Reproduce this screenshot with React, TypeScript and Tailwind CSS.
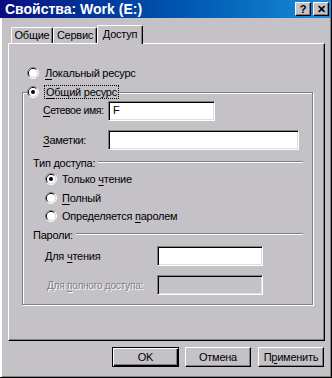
import React from "react";

const BG = "bg-[#c4c2c7]";

const Radio = ({ checked = false }: { checked?: boolean }) => (
  <svg width="12" height="12" viewBox="0 0 12 12" className="shrink-0">
    <path d="M2.11 9.89 A5.5 5.5 0 0 1 9.89 2.11" fill="none" stroke="#808080" strokeWidth="1" />
    <path d="M9.89 2.11 A5.5 5.5 0 0 1 2.11 9.89" fill="none" stroke="#ffffff" strokeWidth="1" />
    <path d="M2.82 9.18 A4.5 4.5 0 0 1 9.18 2.82" fill="none" stroke="#000000" strokeWidth="1" />
    <path d="M9.18 2.82 A4.5 4.5 0 0 1 2.82 9.18" fill="none" stroke="#dfdfdf" strokeWidth="1" />
    <circle cx="6" cy="6" r="4" fill="#ffffff" />
    {checked && <circle cx="6" cy="6" r="2" fill="#000000" />}
  </svg>
);

const Field = ({ w, value = "", disabled = false }: { w: string; value?: string; disabled?: boolean }) => (
  <div
    className={`${w} shrink-0 h-[20px] border border-t-[#808080] border-l-[#808080] border-r-white border-b-white shadow-[inset_1px_1px_0_#000,inset_-1px_-1px_0_#dfdfdf] ${
      disabled ? BG : "bg-white"
    } pl-[4px] pt-[3px] leading-none`}
  >
    {value}
  </div>
);

const Etched = () => <div className="flex-1 h-[2px] border-t border-t-[#808080] border-b border-b-white" />;

const Btn = ({ children, def = false }: { children: React.ReactNode; def?: boolean }) => (
  <div
    className={`h-[20px] flex items-center justify-center ${BG} ${
      def
        ? "w-[67px] border border-black shadow-[inset_1px_1px_0_#fff,inset_-1px_-1px_0_#000,inset_-2px_-2px_0_#808080]"
        : "w-[66px] border border-t-white border-l-white border-r-black border-b-black shadow-[inset_-1px_-1px_0_#808080]"
    }`}
  >
    {children}
  </div>
);

const TitleBtn = ({ children }: { children: React.ReactNode }) => (
  <div className={`w-[16px] h-[14px] ${BG} border border-t-white border-l-white border-r-black border-b-black shadow-[inset_-1px_-1px_0_#808080] flex items-center justify-center text-[11px] font-bold leading-none text-black`}>
    {children}
  </div>
);

const Tab = ({ label, w, active = false }: { label: string; w: string; active?: boolean }) => (
  <div
    className={`${w} ${BG} flex items-center justify-center rounded-t-[2px] border-t border-l border-t-white border-l-white border-r border-r-black shadow-[inset_-1px_0_0_#808080] ${
      active ? "h-[19px] -mb-px relative z-10 pb-[2px]" : "h-[16px]"
    }`}
  >
    {label}
  </div>
);

const U = ({ children }: { children: React.ReactNode }) => <span className="underline underline-offset-[2px]">{children}</span>;

export default function App() {
  return (
    <div className={`w-[332px] h-[378px] ${BG} flex flex-col border-r border-b border-black shadow-[inset_2px_0_0_#fff,inset_-1px_-1px_0_#808080] font-['Liberation_Sans',Arial,sans-serif] text-[11px] text-black overflow-hidden whitespace-nowrap`}>
      {/* title bar */}
      <div className="h-[18px] w-full flex items-center justify-between pl-[5px] pr-[2px] bg-linear-to-r from-[#0a0a80] to-[#1a8cd8]">
        <span className="text-white font-bold text-[14px] leading-none">Свойства: Work (E:)</span>
        <div className="flex gap-[2px]">
          <TitleBtn>?</TitleBtn>
          <TitleBtn>✕</TitleBtn>
        </div>
      </div>

      <div className="pl-[8px] flex flex-col tracking-[-0.25px]">
        {/* tabs */}
        <div className="mt-[7px] h-[18px] flex items-end pl-[3px]">
          <Tab label="Общие" w="w-[42px]" />
          <Tab label="Сервис" w="w-[44px]" />
          <Tab label="Доступ" w="w-[46px]" active />
        </div>

        {/* panel */}
        <div className="w-[317px] h-[298px] border border-t-white border-l-white border-r-black border-b-black shadow-[inset_-1px_-1px_0_#808080] flex flex-col">
          <div className="mt-[22px] h-[14px] pl-[18px] flex items-center gap-[6px]">
            <Radio />
            <span>
              <U>Л</U>окальный ресурс
            </span>
          </div>

          <div className="mt-[12px] ml-[13px] w-[291px] border border-[#808080] shadow-[inset_1px_1px_0_#fff,1px_1px_0_#fff] flex flex-col pb-[9px]">
            <div className={`-mt-[8px] ml-[4px] h-[14px] w-fit flex items-center ${BG}`}>
              <Radio checked />
              <span className="ml-[5px] border border-dotted border-black px-[1px] leading-[12px]">
                <U>О</U>бщий ресурс
              </span>
            </div>

            <div className="mt-[2px] h-[20px] flex items-center pl-[20px]">
              <span className="w-[65px] shrink-0 text-[10.5px] tracking-[-0.4px]">
                <U>С</U>етевое имя:
              </span>
              <Field w="w-[107px]" value="F" />
            </div>
            <div className="mt-[9px] h-[20px] flex items-center pl-[20px]">
              <span className="w-[65px] shrink-0">
                <U>З</U>аметки:
              </span>
              <Field w="w-[191px]" />
            </div>

            <div className="mt-[6px] h-[14px] flex items-center pl-[10px] pr-[9px]">
              <span>Тип доступа:</span>
              <div className="ml-[3px] flex-1 flex -mt-[2px]">
                <Etched />
              </div>
            </div>
            <div className="mt-[2px] h-[14px] flex items-center pl-[22px] gap-[5px]">
              <Radio checked />
              <span>
                Только <U>ч</U>тение
              </span>
            </div>
            <div className="mt-[5px] h-[14px] flex items-center pl-[22px] gap-[5px]">
              <Radio />
              <span>
                <U>П</U>олный
              </span>
            </div>
            <div className="mt-[4px] h-[14px] flex items-center pl-[22px] gap-[5px]">
              <Radio />
              <span>
                Определяется <U>п</U>аролем
              </span>
            </div>

            <div className="mt-[5px] h-[14px] flex items-center pl-[10px] pr-[9px]">
              <span>Пароли:</span>
              <div className="ml-[3px] flex-1 flex -mt-[2px]">
                <Etched />
              </div>
            </div>
            <div className="mt-[4px] h-[20px] flex items-center pl-[22px]">
              <span className="w-[112px] shrink-0">
                Для <U>ч</U>тения
              </span>
              <Field w="w-[106px]" />
            </div>
            <div className="mt-[9px] h-[20px] flex items-center pl-[22px]">
              <span className="w-[112px] shrink-0 pl-[2px] text-[10px] tracking-[-0.2px] text-[#808080] [text-shadow:1px_1px_0_#fff]">
                Для <U>п</U>олного доступа:
              </span>
              <Field w="w-[106px]" disabled />
            </div>
          </div>
        </div>

        {/* buttons */}
        <div className="mt-[6px] w-[317px] pr-[1px] flex justify-end gap-[6px]">
          <Btn def>OK</Btn>
          <Btn>Отмена</Btn>
          <div className="ml-[1px]">
            <Btn>
              <span>
                П<U>р</U>именить
              </span>
            </Btn>
          </div>
        </div>
      </div>
    </div>
  );
}
